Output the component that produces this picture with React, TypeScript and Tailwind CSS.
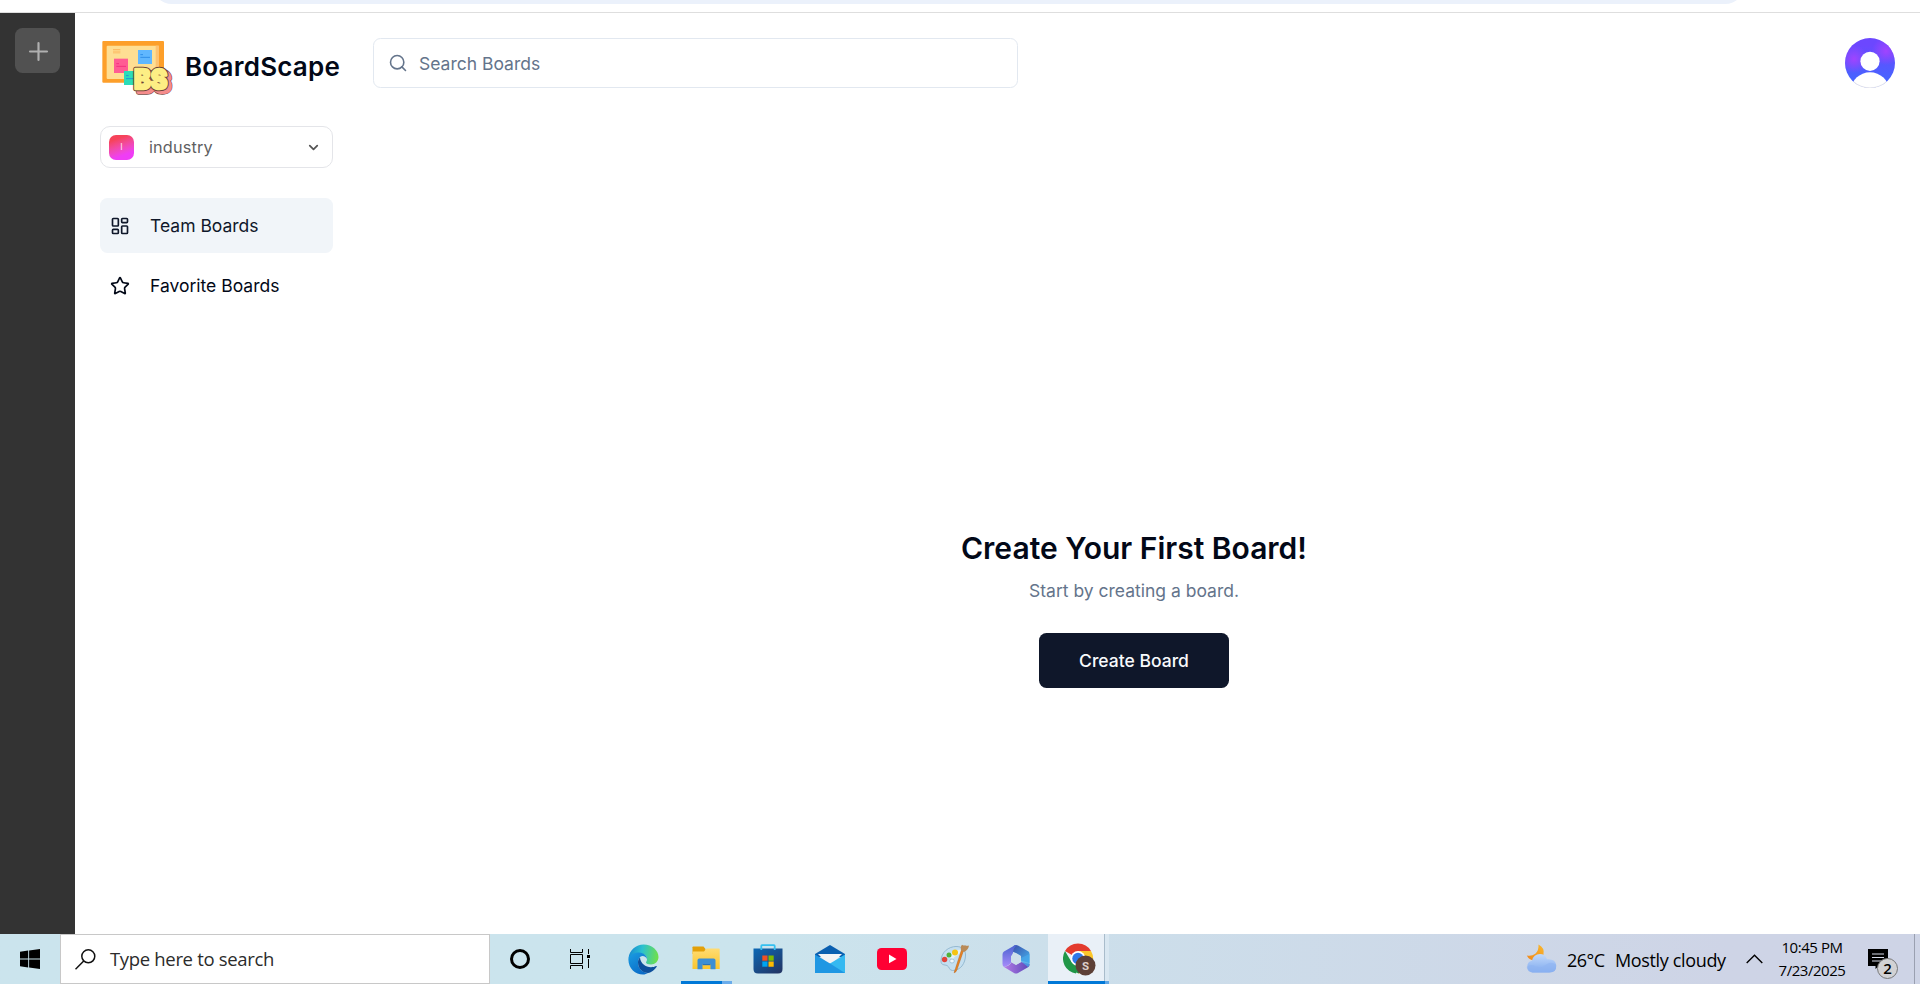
import React from "react";
import { ChevronDown, LayoutDashboard, Plus, Search, Star } from "lucide-react";

function Logo() {
  return (
    <svg width="76" height="59" viewBox="21 18 228 177" className="shrink-0">
      <rect x="22" y="18" width="185" height="125" rx="3" fill="#fd9f2a" />
      <rect x="35" y="32" width="157" height="100" rx="3" fill="#fede93" />
      <rect x="182" y="32" width="10" height="100" fill="#fdc272" />
      <path d="M54 43.500h22M54 48.500h22M54 53.500h22" stroke="#fdb45c" strokeWidth="2.500" />
      <rect x="57" y="71" width="42" height="43" fill="#ff5c93" />
      <path d="M64 94h29M64 86h8" stroke="#f5317f" strokeWidth="3" />
      <rect x="129" y="45" width="42" height="42" fill="#60b7ff" />
      <path d="M136 67h29M136 59h8" stroke="#2f8fe8" strokeWidth="3" />
      <rect x="87" y="108" width="40" height="42" fill="#2bdcb8" />
      <path d="M93 131h25M93 122h8" stroke="#2196d8" strokeWidth="3" />
      <g fontFamily="Inter, sans-serif" fontWeight="900" fontSize="82" strokeLinejoin="round">
        <text x="127" y="172" textLength="100" lengthAdjust="spacingAndGlyphs" fill="#f58c8c" stroke="#7b4a44" strokeWidth="16">BS</text>
        <text x="127" y="172" textLength="100" lengthAdjust="spacingAndGlyphs" fill="#f58c8c" stroke="#f58c8c" strokeWidth="12">BS</text>
        <text x="117" y="161" textLength="100" lengthAdjust="spacingAndGlyphs" fill="#6b4038" stroke="#6b4038" strokeWidth="13">BS</text>
        <text x="117" y="161" textLength="100" lengthAdjust="spacingAndGlyphs" fill="#fdee84" stroke="#fdee84" strokeWidth="7">BS</text>
      </g>
    </svg>
  );
}

function Avatar() {
  return (
    <svg width="50" height="50" viewBox="0 0 50 50">
      <defs>
        <linearGradient id="av" x1="0" y1="0" x2="0" y2="1">
          <stop offset="0.150" stopColor="#6c47ff" />
          <stop offset="0.800" stopColor="#4763ff" />
        </linearGradient>
        <radialGradient id="avp">
          <stop offset="0" stopColor="#a044ff" />
          <stop offset="1" stopColor="#a044ff" stopOpacity="0" />
        </radialGradient>
        <clipPath id="avc"><circle cx="25" cy="25" r="25" /></clipPath>
      </defs>
      <g clipPath="url(#avc)">
        <rect width="50" height="50" fill="url(#av)" />
        <circle cx="41" cy="13" r="14" fill="url(#avp)" />
        <circle cx="9" cy="21" r="14" fill="url(#avp)" />
        <circle cx="25" cy="23.300" r="9.600" fill="#fff" />
        <ellipse cx="25" cy="52" rx="19" ry="17.700" fill="#fff" />
      </g>
      <path d="M9 44a25 25 0 0 0 32 0" fill="none" stroke="#e4e4e8" strokeWidth="0.800" />
    </svg>
  );
}

function WindowsIcon() {
  return (
    <svg width="20" height="20" viewBox="0 0 20 20">
      <path d="M0 2.800L8.200 1.600V9.500H0ZM9.100 1.500L20 0V9.500H9.100ZM0 10.400H8.200V18.400L0 17.200ZM9.100 10.400H20V20L9.100 18.500Z" />
    </svg>
  );
}

function TaskViewIcon() {
  return (
    <svg width="20" height="20" viewBox="0 0 20 20" fill="none" stroke="#000">
      <path d="M.500 0v3.500h12V0M.500 20v-3.500h12V20M.500 5.500h12v9H.500ZM18.500 0v5M18.500 10v9" />
      <path d="M17 6h3v3h-3z" fill="#000" stroke="none" />
    </svg>
  );
}

function EdgeIcon() {
  return (
    <svg width="31" height="31" viewBox="0 0 31 31" className="-ml-0.5">
      <defs>
        <linearGradient id="e1" x1="0" y1="0.300" x2="1" y2="0.400">
          <stop offset="0" stopColor="#1688d4" />
          <stop offset="0.450" stopColor="#2cc1cf" />
          <stop offset="1" stopColor="#6fe04b" />
        </linearGradient>
        <linearGradient id="e2" x1="0" y1="0" x2="0.600" y2="1">
          <stop offset="0" stopColor="#1b9de2" />
          <stop offset="1" stopColor="#0a6cc8" />
        </linearGradient>
      </defs>
      <path d="M.500 14C1.500 6 8 .500 15.700.500 24 .500 30.500 6.500 30.500 13c0 4.500-3.500 7.500-7.500 7.500-3 0-5-1-5-2 0-.800 1-1.200 1-3.500 0-3-2.500-5.500-6.500-5.500-5 0-9 2-12 4.500Z" fill="url(#e1)" />
      <path d="M.500 14C3 10 7 8.500 11 8.500c4.500 0 8 3 8 6.500-1-2-2.500-3-4.500-3-2.500 0-4.500 3-4.500 6.500 0 5.500 4 10 10 10.500-1.500.800-3 1.500-5 1.500C7 30.500-.500 23.500.500 14Z" fill="url(#e2)" />
      <path d="M12 13.500c-1.500 1-2 3-2 5 0 6 4.500 10.500 10 10.500 3.500-.500 7-3.500 8.700-6.300.300-.600-.200-1-.700-.700-1.500.800-3 1.200-5 1.200-5.500 0-10.500-3.700-11-9.700Z" fill="#0d4f9c" />
    </svg>
  );
}

function FolderIcon() {
  return (
    <svg width="28" height="24" viewBox="0 0 28 24" className="-mt-0.5">
      <defs>
        <linearGradient id="f1" x1="0" y1="0" x2="0" y2="1">
          <stop offset="0" stopColor="#ffdc73" />
          <stop offset="1" stopColor="#fbc52d" />
        </linearGradient>
      </defs>
      <path d="M.500 1.200Q.500.500 1.200.500H11.500l2 2.500V8H.500Z" fill="#e3a008" />
      <path d="M.500 5.500H12L14.500 2.500H27q.700 0 .700.700V23H.500Z" fill="url(#f1)" />
      <path d="M5.500 23.300v-9q0-1.800 1.800-1.800h14.400q1.800 0 1.800 1.800v9H18.500v-5.300H10.500v5.300Z" fill="#3b8ed5" />
      <path d="M10.500 18h8v1.200h-8z" fill="#2a72b5" />
    </svg>
  );
}

function StoreIcon() {
  return (
    <svg width="30" height="30" viewBox="0 0 30 30">
      <defs>
        <linearGradient id="s1" x1="0" y1="0" x2="0.800" y2="1">
          <stop offset="0" stopColor="#0c68b5" />
          <stop offset="1" stopColor="#223768" />
        </linearGradient>
      </defs>
      <path d="M.500 4.500h29V25q0 4.500-4.500 4.500H5Q.500 29.500.500 25Z" fill="url(#s1)" />
      <path d="M8.300 6V2Q8.300 1.200 9 1.200h12q.700 0 .700.800v4" fill="none" stroke="#35c0f0" strokeWidth="1.800" />
      <path d="M9.300 11.500h5.200v5.200H9.300z" fill="#f25022" />
      <path d="M15.500 11.500h5.200v5.200h-5.200z" fill="#7fba00" />
      <path d="M9.300 17.500h5.200v5.200H9.300z" fill="#00a4ef" />
      <path d="M15.500 17.500h5.200v5.200h-5.200z" fill="#ffb900" />
    </svg>
  );
}

function MailIcon() {
  return (
    <svg width="30" height="28" viewBox="0 0 30 28">
      <path d="M0 9L15 0l15 9v3H0Z" fill="#0a5fb0" />
      <path d="M3 9h24l-9 9h-6Z" fill="#f3f3f5" />
      <path d="M30 9.500L15 18.500 0 28h30Z" fill="#35b9f1" />
      <path d="M0 9.500V28h30L15 18.500Z" fill="#1f97e3" />
    </svg>
  );
}

function YoutubeIcon() {
  return (
    <svg width="30" height="22" viewBox="0 0 30 22">
      <rect width="30" height="22" rx="4.500" fill="#ff0033" />
      <path d="M12 6.600v8.600l7.500-4.300z" fill="#fff" />
    </svg>
  );
}

function PaintIcon() {
  return (
    <svg width="31" height="30" viewBox="0 0 31 30">
      <path d="M2 17C2 8 10 2.500 17 2.500c6 0 9.500 3 9.500 8.500 0 8.500-5 15.500-13 15.500-3.500 0-3-4-5.500-5S2 21.500 2 17Z" fill="#c4dff0" stroke="#8fb4cd" strokeWidth="0.900" />
      <path d="M10 13c2-5 7-8 12-7 0 5-6 5-8 9Z" fill="#e4f1f8" />
      <circle cx="5.600" cy="15.500" r="2.700" fill="#e0443a" />
      <circle cx="10" cy="11" r="2.500" fill="#53b13a" />
      <circle cx="16" cy="8.500" r="3" fill="#f5c413" />
      <ellipse cx="13" cy="17" rx="2.300" ry="2" fill="#eff7fb" stroke="#8fb4cd" strokeWidth="0.700" />
      <path d="M24.500 6.500L18 25.500q-1 3-2.800 3.300.300-2 1.300-4.300L22.500 6Z" fill="#e98323" stroke="#b75f14" strokeWidth="0.500" />
      <path d="M22.200 6.500Q21 3 23 .700q1.500 1.300 3 .500 2 1 4 .300Q29.500 5.500 25 8Z" fill="#b98a57" />
    </svg>
  );
}

function OfficeIcon() {
  return (
    <svg width="28" height="30" viewBox="0 0 28 30">
      <defs>
        <linearGradient id="o1" x1="0" y1="0" x2="0" y2="1">
          <stop offset="0" stopColor="#4a63d0" />
          <stop offset="1" stopColor="#a78bfa" />
        </linearGradient>
        <linearGradient id="o2" x1="0" y1="0" x2="1" y2="1">
          <stop offset="0" stopColor="#3b4aa8" />
          <stop offset="1" stopColor="#45b4ee" />
        </linearGradient>
        <linearGradient id="o3" x1="0" y1="0" x2="1" y2="0">
          <stop offset="0" stopColor="#b57be6" />
          <stop offset="1" stopColor="#5a48b8" />
        </linearGradient>
      </defs>
      <path d="M12 1.500Q14 .300 16 1.500L26.500 7.500Q27.500 8.300 27.500 10V19L19 16.500V12L14.500 9.300 9 7Z" fill="url(#o2)" />
      <path d="M15 1Q11 4 11 9L9 12.500V18.500Q7 21.500 2 23 .500 22 .500 20V10.500Q.500 8.500 2 7.500L12 1.700Q13.500.700 15 1Z" fill="url(#o1)" />
      <path d="M2 23Q8 22 9.500 18L14 20.800 19 18l8.500 2v1q0 1.500-1.500 2.300L16 29q-2 1-4 0Z" fill="url(#o3)" />
      <path d="M19 14l8.500-4v10q0 2-1.500 3L19 17.500Z" fill="#47a6ea" opacity="0.800" />
      <path d="M14 9.500l4.900 2.800v5.900L14 21l-4.900-2.800v-5.900z" fill="#cddfea" />
    </svg>
  );
}

function ChromeIcon() {
  return (
    <svg width="33" height="33" viewBox="0 0 33 33">
      <path d="M15 15.500L2 8A15 15 0 0 1 28 8Z" fill="#e33b2e" />
      <path d="M15 15.500V8H28A15 15 0 0 1 15 30.500Z" fill="#fcc629" />
      <path d="M2 8L8.800 19.500 15 22l-2 8.400A15 15 0 0 1 2 8Z" fill="#209647" />
      <path d="M8.800 19.500Q15 25 21 19.500L15.500 30.500 10 28Z" fill="#209647" />
      <circle cx="15" cy="15.500" r="7.400" fill="#fff" />
      <circle cx="15" cy="15.500" r="5.700" fill="#2f78ea" />
      <circle cx="22.500" cy="22.500" r="10" fill="#5d4037" />
      <text x="22.500" y="26.600" textAnchor="middle" fontSize="11.500" fontWeight="700" fontFamily="Roboto, sans-serif" fill="#dccfca">S</text>
    </svg>
  );
}

function WeatherIcon() {
  return (
    <svg width="31" height="30" viewBox="0 0 31 30">
      <defs>
        <linearGradient id="w1" x1="0" y1="0" x2="0" y2="1">
          <stop offset="0" stopColor="#c2dafb" />
          <stop offset="1" stopColor="#7fa9ee" />
        </linearGradient>
        <linearGradient id="w2" x1="1" y1="0" x2="0" y2="1">
          <stop offset="0" stopColor="#f9b92d" />
          <stop offset="1" stopColor="#f0861c" />
        </linearGradient>
      </defs>
      <path d="M12.500.500Q19 4 17.500 10.500 15.500 17 8 16.500 3 16 .800 11.500q5 1 8.500-1.800Q13 6.500 12.500.500Z" fill="url(#w2)" />
      <path d="M6.500 28.500a6 6 0 0 1-.500-11.800Q7.500 10 14 10q5 0 7 5.300 8.500-.800 9.300 6.200.200 7-7 7Z" fill="url(#w1)" />
      <path d="M.700 23Q5 19.500 9 22q6 3 11-1.500 5-3.500 10 0 .800 8-7 8H6.500Q1.500 28 .700 23Z" fill="#8fb4f2" opacity="0.600" />
    </svg>
  );
}

function Slot({ children }: { children: React.ReactNode }) {
  return <div className="flex h-full w-[62px] shrink-0 items-center justify-center">{children}</div>;
}

function Taskbar() {
  return (
    <footer className="flex h-[50px] w-full shrink-0 items-center bg-linear-to-r from-[#cbe4ed] from-40% to-[#ced4e6] to-90% font-['Open_Sans',sans-serif] text-black">
      <div className="flex h-full w-[60px] shrink-0 items-center justify-center">
        <WindowsIcon />
      </div>
      <div className="flex h-full w-[430px] shrink-0 items-center border border-[#c8c8c8] bg-white pl-3.5">
        <svg width="21" height="21" viewBox="0 0 21 21" fill="none" stroke="#111" strokeWidth="1.500">
          <circle cx="13.300" cy="7.300" r="6.500" />
          <path d="M8.700 12L.500 20.300" />
        </svg>
        <span className="ml-3.5 text-[18.500px] tracking-[-0.330px] text-[#2b2b2b]">Type here to search</span>
      </div>
      <div className="flex h-full w-[60px] shrink-0 items-center justify-center">
        <div className="size-5 rounded-full border-[3px] border-black" />
      </div>
      <div className="flex h-full w-[63px] shrink-0 items-center pl-5">
        <TaskViewIcon />
      </div>
      <Slot><EdgeIcon /></Slot>
      <div className="relative flex h-full w-[62px] shrink-0 items-center justify-center">
        <FolderIcon />
        <div className="absolute bottom-0 left-1.5 flex h-[3px] w-[51px] bg-[#6aaceb]">
          <div className="w-[41px] bg-[#0078d7]" />
        </div>
      </div>
      <Slot><StoreIcon /></Slot>
      <Slot><MailIcon /></Slot>
      <Slot><YoutubeIcon /></Slot>
      <Slot><PaintIcon /></Slot>
      <Slot><OfficeIcon /></Slot>
      <div className="relative ml-px flex h-full w-[61px] shrink-0 items-center bg-[#d9e7f1]">
        <div className="flex h-full w-[57px] items-center border-r border-[#a9bccb] bg-[#e9f0f7] pl-[15px] pt-px">
          <ChromeIcon />
        </div>
        <div className="absolute bottom-0 left-0 flex h-[3px] w-full bg-[#5fa6e6]">
          <div className="w-[57px] bg-[#0078d7]" />
        </div>
      </div>
      <div className="ml-auto flex h-full shrink-0 items-center">
        <WeatherIcon />
        <span className="ml-2.5 mt-[3px] w-12 text-[18px] tracking-[-0.500px]">26°C</span>
        <span className="mt-[3px] w-[131px] text-[18px] tracking-[-0.350px] whitespace-nowrap">Mostly cloudy</span>
        <svg width="17" height="10" viewBox="0 0 17 10" fill="none" stroke="#000" strokeWidth="1.400">
          <path d="M.700 9L8.500 1.200 16.300 9" />
        </svg>
        <div className="ml-[9px] flex w-20 flex-col items-center text-[15px] leading-[23px] tracking-[-0.450px]">
          <span>10:45 PM</span>
          <span>7/23/2025</span>
        </div>
        <div className="relative ml-4 h-5 w-[46px]">
          <svg width="20" height="20" viewBox="0 0 20 20">
            <path d="M0 0h20v17h-9L7.500 20v-3H0Z" />
            <path d="M4 5h12M4 8.500h12M4 12h12" stroke="#d5dae8" strokeWidth="1.200" />
          </svg>
          <div className="absolute left-[9px] top-[9px] flex size-[21px] items-center justify-center rounded-full border border-[#777] bg-[#d2d2d4] text-[15px] font-semibold leading-none">
            2
          </div>
        </div>
        <div className="h-full w-1.5 border-l border-[#9aa0b0]" />
      </div>
    </footer>
  );
}

export default function App() {
  return (
    <div className="flex h-[984px] w-[1920px] flex-col overflow-hidden bg-white font-[Inter,sans-serif] text-[#020817]">
      <div className="h-[13px] shrink-0 overflow-hidden border-b border-[#dedede] pl-[152px]">
        <div className="-mt-9 h-10 w-[1593px] rounded-full bg-[#ebf1fb]" />
      </div>
      <div className="flex min-h-0 flex-1">
        <aside className="w-[75px] shrink-0 bg-[#333] p-[15px]">
          <button className="flex size-[45px] items-center justify-center rounded-[7.500px] bg-[#515151] pl-px pt-px text-[#b0b0b0]">
            <Plus size={29} strokeWidth={1.800} />
          </button>
        </aside>
        <nav className="flex w-[258px] shrink-0 flex-col pl-[25px] pt-[27px]">
          <div className="flex h-[56px] items-start whitespace-nowrap">
            <div className="ml-0.5 mt-px"><Logo /></div>
            <span className="ml-[7px] mt-[9px] text-[26px] leading-9 font-semibold tracking-[0.200px]">BoardScape</span>
          </div>
          <button className="mt-[30px] flex h-[42px] items-center rounded-[10px] border border-[#e4e5e9] pl-2 pr-[11px]">
            <span className="flex size-[25px] items-center justify-center rounded-[7px] bg-linear-160 from-[#f6435a] from-20% to-[#ef3df5] to-75% text-[9px] text-white/80">I</span>
            <span className="ml-[15px] text-[16.250px] tracking-[0.150px] text-[#5f5f62]">industry</span>
            <ChevronDown size={15} strokeWidth={2.800} className="ml-auto text-[#555]" />
          </button>
          <button className="mt-[30px] flex h-[55px] items-center rounded-[7.500px] bg-[#f1f5f9] pl-2.5">
            <LayoutDashboard size={20} strokeWidth={2} className="text-[#0f172a]" />
            <span className="ml-5 mt-0.5 text-[17.500px] text-[#0f172a]">Team Boards</span>
          </button>
          <button className="mt-[5px] flex h-[55px] items-center pl-2.5">
            <Star size={20} strokeWidth={2} />
            <span className="ml-5 mt-0.5 text-[17.500px]">Favorite Boards</span>
          </button>
        </nav>
        <main className="flex flex-1 flex-col">
          <header className="flex items-center justify-between pl-10 pr-[25px] pt-[25px]">
            <div className="flex h-[50px] w-[645px] items-center gap-[11px] rounded-[7.500px] border border-[#e2e8f0] pl-3.5 text-[#64748b]">
              <Search size={20} strokeWidth={1.900} />
              <span className="mt-0.5 text-[17.500px]">Search Boards</span>
            </div>
            <Avatar />
          </header>
          <section className="flex flex-1 flex-col items-center pl-[15px] pt-[442px]">
            <h2 className="text-[30px] leading-9 font-semibold">Create Your First Board!</h2>
            <p className="mt-3 text-[17.500px] leading-[25px] text-[#64748b]">Start by creating a board.</p>
            <button className="mt-[30px] flex h-[55px] w-[190px] items-center justify-center rounded-[7.500px] bg-[#0f172a] pt-0.5 text-[17.500px] font-medium text-[#f8fafc]">
              Create Board
            </button>
          </section>
        </main>
      </div>
      <Taskbar />
    </div>
  );
}
